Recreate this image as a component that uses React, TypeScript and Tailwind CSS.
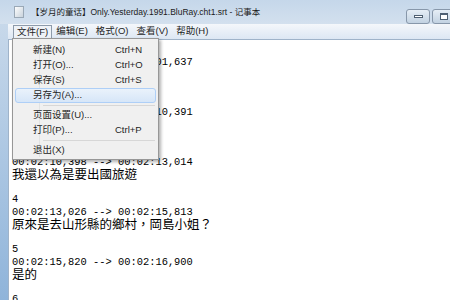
const mono = "font-['Liberation_Mono','DejaVu_Sans_Mono',monospace]";
const cjk = "font-['Noto_Sans_CJK_TC','Noto_Sans_CJK_SC',sans-serif]";
const ui = "font-['Liberation_Sans','Noto_Sans_CJK_SC',sans-serif]";

const lines: { t: string; cn?: boolean }[] = [
  { t: "1" },
  { t: "00:01:58,102 --> 00:02:01,637" },
  { t: "在好多地方都可以看到", cn: true },
  { t: "" },
  { t: "2" },
  { t: "00:02:07,210 --> 00:02:10,391" },
  { t: "那麼夏天要去哪裡呢", cn: true },
  { t: "" },
  { t: "3" },
  { t: "00:02:10,398 --> 00:02:13,014" },
  { t: "我還以為是要出國旅遊", cn: true },
  { t: "" },
  { t: "4" },
  { t: "00:02:13,026 --> 00:02:15,813" },
  { t: "原來是去山形縣的鄉村，岡島小姐？", cn: true },
  { t: "" },
  { t: "5" },
  { t: "00:02:15,820 --> 00:02:16,900" },
  { t: "是的", cn: true },
  { t: "" },
  { t: "6" },
];

const items: ({ label: string; key?: string; hot?: boolean } | null)[] = [
  { label: "新建(N)", key: "Ctrl+N" },
  { label: "打开(O)...", key: "Ctrl+O" },
  { label: "保存(S)", key: "Ctrl+S" },
  { label: "另存为(A)...", hot: true },
  null,
  { label: "页面设置(U)..." },
  { label: "打印(P)...", key: "Ctrl+P" },
  null,
  { label: "退出(X)" },
];

const App = () => {
  return (
    <div className="w-[450px] h-[300px] overflow-hidden relative bg-[#b7cde4]">
      {/* title bar */}
      <div className="h-[24px] flex items-center bg-gradient-to-b from-[#c5d7ea] to-[#d3e0ee]">
        <div className="ml-[14px] w-[10px] h-[12px] bg-gradient-to-br from-[#fdfdfd] to-[#c9d3dc] border border-[#9aa8b6]" />
        <div className={`${ui} ml-[7px] text-[8.5px] text-[#1b1b1b] whitespace-nowrap`}>
          【岁月的童话】Only.Yesterday.1991.BluRay.cht1.srt - 记事本
        </div>
        <div className="ml-auto -mr-[6px] flex gap-[2px] self-start mt-[9px]">
          <div className="w-[24px] h-[15px] rounded-[3px] border border-[#8797aa] bg-gradient-to-b from-[#e6eef6] to-[#c2d2e2] flex items-center justify-center">
            <div className="w-[9px] h-[3px] bg-white border border-[#4e5f72]" />
          </div>
          <div className="w-[24px] h-[15px] rounded-[3px] border border-[#8797aa] bg-gradient-to-b from-[#e6eef6] to-[#c2d2e2] flex items-center justify-center">
            <div className="w-[8px] h-[7px] bg-white border border-[#4e5f72] border-t-2" />
          </div>
        </div>
      </div>
      {/* body with frame */}
      <div className="flex h-[276px]">
        <div className="w-[8px] bg-gradient-to-b from-[#c7d8ea] to-[#8fb4da]" />
        <div className="flex-1 flex flex-col">
          {/* menu bar */}
          <div className={`${ui} h-[15px] flex items-center text-[9.5px] text-[#1e1e1e] bg-gradient-to-b from-[#f4f7fb] to-[#dde7f3]`}>
            <span className="ml-[5px] px-[3px] h-[14px] leading-[12px] border border-[#8d9bab] bg-[#eef2f7]">文件(F)</span>
            <span className="ml-[4px]">编辑(E)</span>
            <span className="ml-[8px]">格式(O)</span>
            <span className="ml-[8px]">查看(V)</span>
            <span className="ml-[8px]">帮助(H)</span>
          </div>
          {/* text area */}
          <div className="flex-1 bg-white border-t border-l border-[#9fb3c9] pt-[3px] pl-[3px] overflow-hidden">
            {lines.map((l, i) => (
              <div
                key={i}
                className={`h-[12.5px] leading-[12.5px] whitespace-nowrap text-black ${
                  l.cn ? `${cjk} text-[12.5px]` : `${mono} text-[10.4px]`
                }`}
              >
                {l.t}
              </div>
            ))}
          </div>
        </div>
      </div>
      {/* file menu dropdown */}
      <div className={`${ui} absolute left-[12px] top-[38px] w-[147px] bg-[#f0f0f0] border border-[#979797] shadow-[2px_2px_3px_rgba(0,0,0,0.3)] pt-[4px] pb-[1px] px-[2px] text-[9.5px] text-[#1e1e1e]`}>
        <div className="absolute left-[26px] top-[2px] bottom-[2px] w-px bg-[#e2e3e3]" />
        {items.map((it, i) =>
          it === null ? (
            <div key={i} className="h-[5px] flex items-center pl-[28px] pr-[1px]">
              <div className="w-full h-px bg-[#d7d7d7]" />
            </div>
          ) : (
            <div
              key={i}
              className={`relative h-[15px] flex items-center pl-[17px] rounded-[3px] ${
                it.hot ? "bg-gradient-to-b from-[#eaf2fb] to-[#d6e6f8] border border-[#aecff7]" : "border border-transparent"
              }`}
            >
              <span>{it.label}</span>
              {it.key && <span className="absolute left-[99px]">{it.key}</span>}
            </div>
          )
        )}
      </div>
    </div>
  );
};

export default App;
